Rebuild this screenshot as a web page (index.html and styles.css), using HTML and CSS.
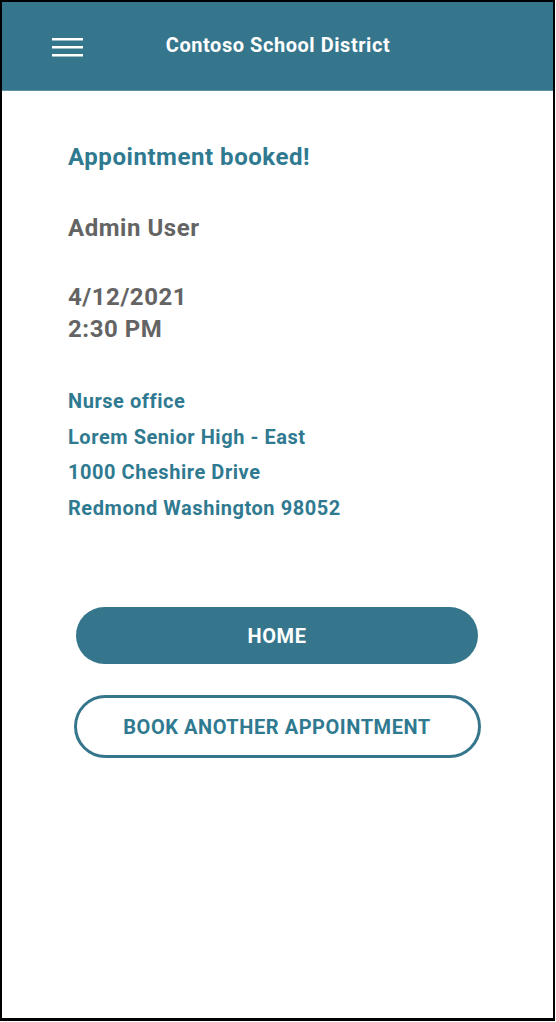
FILE: index.html
```html
<!DOCTYPE html>
<html lang="en">
<head>
<meta charset="utf-8">
<title>Appointment booked</title>
<link rel="stylesheet" href="styles.css">
</head>
<body>
<div class="frame">
  <header class="topbar">
    <button class="menu" aria-label="Menu">
      <svg width="32" height="20" viewBox="0 0 32 20"><rect x="0" y="1" width="31" height="2.5" fill="#fff"/><rect x="0" y="9" width="31" height="2.5" fill="#fff"/><rect x="0" y="17" width="31" height="2.5" fill="#fff"/></svg>
    </button>
    <h1 class="brand">Contoso School District</h1>
  </header>
  <main class="content">
    <h2 class="status">Appointment booked!</h2>
    <p class="user">Admin User</p>
    <p class="when">4/12/2021<br>2:30 PM</p>
    <ul class="place">
      <li>Nurse office</li>
      <li>Lorem Senior High - East</li>
      <li>1000 Cheshire Drive</li>
      <li>Redmond Washington 98052</li>
    </ul>
    <div class="actions">
      <button class="btn btn-home">HOME</button>
      <button class="btn btn-outline">BOOK ANOTHER APPOINTMENT</button>
    </div>
  </main>
</div>
</body>
</html>
```
FILE: styles.css
```css
* { box-sizing: border-box; }
html, body { margin: 0; padding: 0; background: #fff; }
body { font-family: Roboto, "Noto Sans", Arial, sans-serif; letter-spacing: 0.55px; }
.frame {
  width: 555px;
  height: 1021px;
  border: 2px solid #000;
  border-bottom-width: 3px;
  display: flex;
  flex-direction: column;
  position: relative;
}
.topbar {
  height: 89px;
  background: #36768c;
  border-bottom: 1px solid #5c93a5;
  position: relative;
  display: flex;
  align-items: center;
  justify-content: center;
}
.menu {
  position: absolute;
  left: 50px;
  top: 35px;
  padding: 0;
  border: 0;
  background: none;
  line-height: 0;
}
.brand {
  margin: 0;
  color: #fff;
  font-size: 20px;
  font-weight: 700;
  margin-top: -2px;
  margin-left: 1px;
}
.content {
  padding: 52px 0 0 66px;
}
.status {
  margin: 0;
  color: #2f7a90;
  font-size: 24px;
  line-height: 28px;
  font-weight: 700;
}
.user {
  margin: 43px 0 0;
  color: #646464;
  font-size: 24px;
  line-height: 28px;
  font-weight: 700;
}
.when {
  margin: 39px 0 0;
  color: #646464;
  font-size: 24px;
  line-height: 32px;
  font-weight: 700;
}
.place {
  list-style: none;
  margin: 39px 0 0;
  padding: 0;
  color: #2f7a90;
  font-size: 20px;
  line-height: 35.5px;
  font-weight: 700;
}
.actions {
  margin: 81px 0 0 -66px;
  display: flex;
  flex-direction: column;
  align-items: center;
  gap: 31px;
  padding-right: 1px;
}
.btn {
  font-family: inherit;
  font-weight: 700;
  font-size: 20px;
  letter-spacing: 0.55px;
  border-radius: 40px;
  cursor: pointer;
}
.btn-home {
  width: 402px;
  height: 57px;
  background: #36768c;
  color: #fff;
  border: 0;
}
.btn-outline {
  width: 407px;
  height: 63px;
  background: #fff;
  color: #2f7a90;
  border: 3px solid #36768c;
}
```
